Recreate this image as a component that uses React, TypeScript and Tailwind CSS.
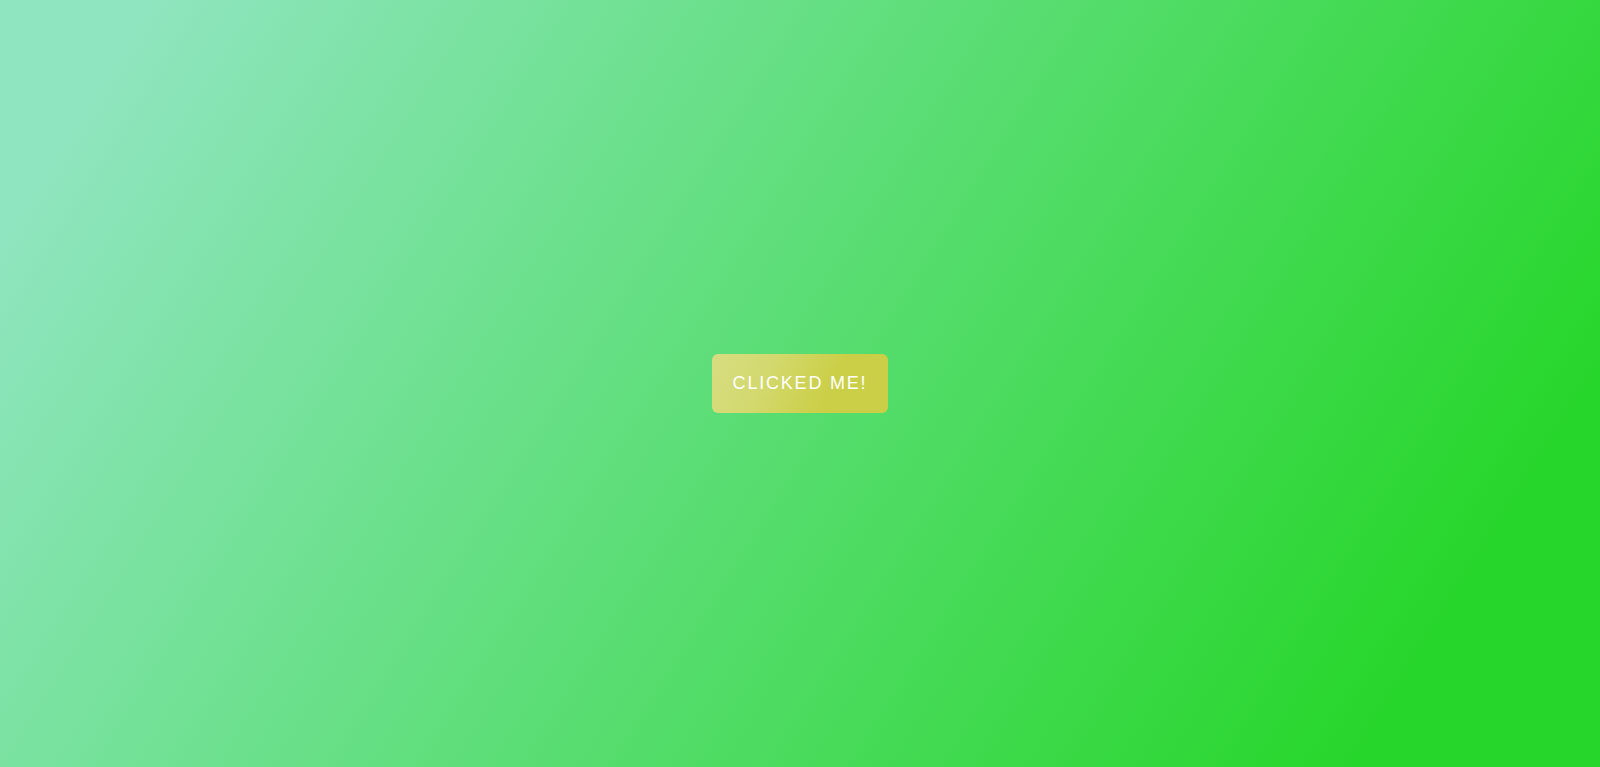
export default function App() {
  return (
    <div className="flex h-[767px] w-full items-center justify-center bg-[linear-gradient(122deg,#8fe5bf_7%,#27d62b_88%)] font-['Liberation_Sans',Arial,sans-serif]">
      <button className="flex h-[59px] w-[176px] items-center justify-center rounded-md bg-[linear-gradient(115deg,#d7dd80_0%,#d3d96f_30%,#cbcf48_65%)] text-[18px] uppercase tracking-[0.1em] text-white">
        Clicked me!
      </button>
    </div>
  );
}
